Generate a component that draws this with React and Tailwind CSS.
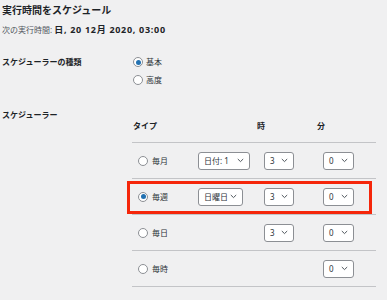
import React from 'react';

const Chevron = () => (
  <svg width="7" height="5" viewBox="0 0 7 5" fill="none" className="shrink-0">
    <polyline points="0.8,1 3.5,3.6 6.2,1" stroke="#50575e" strokeWidth="1" />
  </svg>
);

const Select = ({ value, width }) => (
  <div
    className={`flex items-center justify-between h-[18px] ${width} pl-[5px] pr-[5px] bg-white border border-[#8c8f94] rounded-[3px] text-[8px] text-[#2c3338]`}
  >
    <span className="leading-none">{value}</span>
    <Chevron />
  </div>
);

const Radio = ({ checked }) => (
  <span className="flex items-center justify-center w-[10px] h-[10px] rounded-full bg-white border border-[#8c8f94] shrink-0">
    {checked && <span className="w-[5px] h-[5px] rounded-full bg-[#2271b1]"></span>}
  </span>
);

const rows = [
  { label: '毎月', date: '日付: 1', dateW: 'w-[52px]', hour: '3', min: '0' },
  { label: '毎週', date: '日曜日', dateW: 'w-[45px]', hour: '3', min: '0', checked: true },
  { label: '毎日', hour: '3', min: '0' },
  { label: '毎時', min: '0' },
];

export default function App() {
  return (
    <div className="w-[387px] h-[300px] overflow-hidden bg-[#f0f0f1] pl-[2px] text-[#1d2327] font-['Noto_Sans','Noto_Sans_CJK_JP',sans-serif]">
      <h2 className="pt-[4px] text-[10px] leading-[12px] font-bold">実行時間をスケジュール</h2>
      <p className="mt-[9px] text-[8px] leading-[10px]">
        <span className="text-[#50575e]">次の実行時間: </span>
        <span className="font-bold text-[9px] tracking-[0.7px]">日, 20 12月 2020, 03:00</span>
      </p>

      {/* scheduler type */}
      <div className="flex mt-[18px]">
        <div className="w-[131px] h-[18px] flex items-center text-[8px] font-bold">スケジューラーの種類</div>
        <div className="flex flex-col">
          <label className="flex items-center gap-[3px] h-[18px] text-[8px] text-[#2c3338]">
            <Radio checked />
            基本
          </label>
          <label className="flex items-center gap-[3px] h-[18px] text-[8px] text-[#2c3338]">
            <Radio />
            高度
          </label>
        </div>
      </div>

      {/* scheduler */}
      <div className="flex mt-[20px]">
        <div className="w-[130px] text-[8px] leading-[12px] font-bold">スケジューラー</div>
        <div className="w-[244px]">
          <div className="flex items-center h-[34px] border-b border-[#c3c4c7] text-[8px] font-bold">
            <span className="w-[125px] pl-[1px]">タイプ</span>
            <span className="w-[60px]">時</span>
            <span>分</span>
          </div>
          {rows.map((r) => (
            <div key={r.label} className="relative flex items-center h-[36px] border-b border-[#c3c4c7]">
              <div className="w-[66px] flex items-center gap-[4px] pl-[6px] text-[8px] text-[#2c3338]">
                <Radio checked={r.checked} />
                {r.label}
              </div>
              <div className="w-[66px]">{r.date && <Select value={r.date} width={r.dateW} />}</div>
              <div className="w-[59px]">{r.hour && <Select value={r.hour} width="w-[30px]" />}</div>
              <div>{r.min && <Select value={r.min} width="w-[31px]" />}</div>
              {r.checked && (
                <div className="absolute left-[-5px] right-[4px] top-[2px] bottom-[0px] border-[3px] border-[#f5260a]"></div>
              )}
            </div>
          ))}
        </div>
      </div>
    </div>
  );
}
